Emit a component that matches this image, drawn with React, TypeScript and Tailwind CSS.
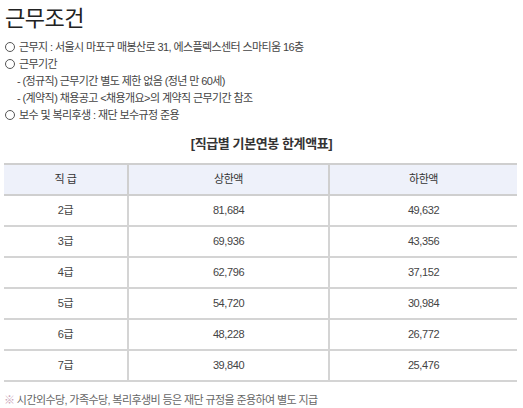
const rows = [
  ['2급', '81,684', '49,632'],
  ['3급', '69,936', '43,356'],
  ['4급', '62,796', '37,152'],
  ['5급', '54,720', '30,984'],
  ['6급', '48,228', '26,772'],
  ['7급', '39,840', '25,476'],
];

const Circle = () => (
  <span className="inline-block w-[10px] h-[10px] rounded-full border border-[#555] mr-[4px] align-[-1px]" />
);

export default function App() {
  return (
    <div
      className="w-[523px] h-[408px] bg-white overflow-hidden text-[#444]"
      style={{ fontFamily: '"Liberation Sans", "Noto Sans CJK KR", sans-serif' }}
    >
      <h1 className="pl-[5px] pt-[5px] text-[22px] leading-[28px] text-[#222] font-normal tracking-[-0.5px]">근무조건</h1>

      <ul className="mt-[6px] pl-[5px] text-[11px] leading-[17px] tracking-[-0.6px]">
        <li><Circle />근무지 : 서울시 마포구 매봉산로 31, 에스플렉스센터 스마티움 16층</li>
        <li><Circle />근무기간</li>
        <li className="pl-[12px]">- (정규직) 근무기간 별도 제한 없음 (정년 만 60세)</li>
        <li className="pl-[12px]">- (계약직) 채용공고 &lt;채용개요&gt;의 계약직 근무기간 참조</li>
        <li><Circle />보수 및 복리후생 : 재단 보수규정 준용</li>
      </ul>

      <p className="mt-[10px] text-center text-[13px] leading-[20px] font-bold text-[#333] tracking-[-0.4px]">
        [직급별 기본연봉 한계액표]
      </p>

      <table className="mt-[9px] ml-[4px] w-[513px] border-collapse text-[11px] text-[#444] tracking-[-0.4px]">
        <thead>
          <tr className="bg-[#eef1fa] h-[31px] border-t-2 border-b-2 border-[#cfcfcf]">
            <th className="w-[124px] font-normal text-[#333] border-r-2 border-[#cfcfcf]">직 급</th>
            <th className="w-[201px] font-normal text-[#333] border-r-2 border-[#cfcfcf]">상한액</th>
            <th className="font-normal text-[#333]">하한액</th>
          </tr>
        </thead>
        <tbody>
          {rows.map((r) => (
            <tr key={r[0]} className="h-[31px] border-b-2 border-[#d4d4d4]">
              <td className="text-center border-r-2 border-[#d4d4d4]">{r[0]}</td>
              <td className="text-center border-r-2 border-[#d4d4d4]">{r[1]}</td>
              <td className="text-center">{r[2]}</td>
            </tr>
          ))}
        </tbody>
      </table>

      <p className="mt-[10px] pl-[4px] text-[11px] leading-[16px] text-[#666] tracking-[-0.6px]">
        <span className="text-[#c9a3b8]">※</span> 시간외수당, 가족수당, 복리후생비 등은 재단 규정을 준용하여 별도 지급
      </p>
    </div>
  );
}
